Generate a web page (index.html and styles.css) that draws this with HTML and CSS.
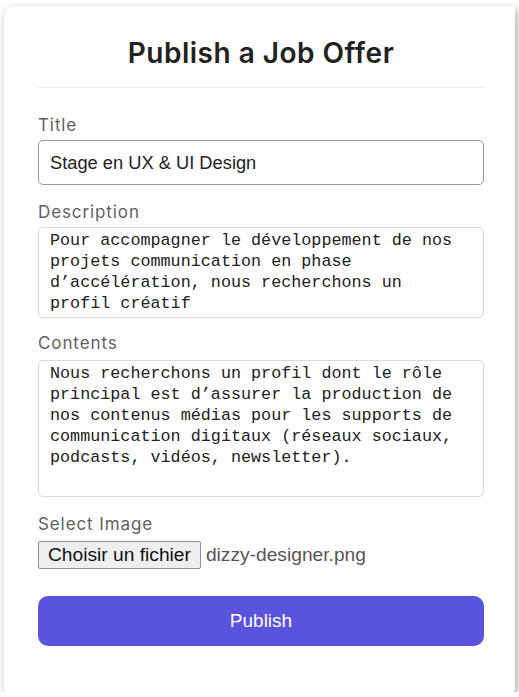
FILE: index.html
```html
<!DOCTYPE html>
<html lang="fr">
<head>
<meta charset="utf-8">
<title>Publish a Job Offer</title>
<link rel="stylesheet" href="styles.css">
</head>
<body>
<div class="card">
  <h1 class="title">Publish a Job Offer</h1>
  <div class="divider"></div>
  <form class="form">
    <label class="label">Title</label>
    <input class="input" type="text" value="Stage en UX &amp; UI Design">
    <label class="label label-desc">Description</label>
    <textarea class="area area-desc">Pour accompagner le développement de nos projets communication en phase d’accélération, nous recherchons un profil créatif</textarea>
    <label class="label label-contents">Contents</label>
    <textarea class="area area-contents">Nous recherchons un profil dont le rôle principal est d’assurer la production de nos contenus médias pour les supports de communication digitaux (réseaux sociaux, podcasts, vidéos, newsletter).</textarea>
    <label class="label label-image">Select Image</label>
    <div class="file-row">
      <span class="file-btn">Choisir un fichier</span>
      <span class="file-name">dizzy-designer.png</span>
    </div>
    <button class="publish" type="button">Publish</button>
  </form>
</div>
</body>
</html>
```
FILE: styles.css
```css
html, body {
  margin: 0;
  padding: 0;
  background: #ffffff;
}
body {
  padding: 6px 4px 0 4px;
  font-family: "Inter", "Liberation Sans", sans-serif;
}
.card {
  width: 511px;
  height: 686px;
  box-sizing: border-box;
  background: #ffffff;
  border-radius: 10px 4px 3px 3px;
  box-shadow: 2px 3px 8px rgba(0,0,0,0.35);
  padding: 0 31px 0 34px;
}
.title {
  margin: 0;
  padding-top: 27px;
  height: 40px;
  line-height: 40px;
  text-align: center;
  font-family: "Inter", sans-serif;
  font-weight: 600;
  font-size: 28px;
  color: #222222;
  letter-spacing: 0.5px;
}
.divider {
  margin-top: 14px;
  height: 1px;
  background: #eeeeee;
}
.form {
  display: flex;
  flex-direction: column;
  padding-top: 25px;
}
.label {
  font-family: "Inter", sans-serif;
  font-size: 17px;
  line-height: 24px;
  letter-spacing: 0.9px;
  color: #5f5f5f;
  margin-bottom: 3px;
}
.label-desc {
  margin-top: 15px;
}
.label-contents {
  margin-top: 13px;
  margin-bottom: 5px;
}
.label-image {
  margin-top: 15px;
}
.input {
  box-sizing: border-box;
  height: 45px;
  width: 100%;
  border: 1px solid #9a9a9a;
  border-radius: 5px;
  padding: 0 11px;
  font-family: "Liberation Sans", Arial, sans-serif;
  font-size: 18.3px;
  color: #222222;
  outline: none;
}
.area {
  box-sizing: border-box;
  width: 100%;
  border: 1px solid #dadada;
  border-radius: 5px;
  padding: 2px 11px;
  font-family: "Liberation Mono", monospace;
  font-size: 16.75px;
  line-height: 21px;
  color: #222222;
  resize: none;
  overflow: hidden;
  outline: none;
}
.area-desc {
  height: 91px;
}
.area-contents {
  height: 137px;
}
.file-row {
  display: flex;
  align-items: center;
  gap: 5px;
  margin-top: 2px;
}
.file-btn {
  box-sizing: border-box;
  height: 28px;
  line-height: 26px;
  padding: 0 9px;
  background: #efefef;
  border: 1px solid #8f8f8f;
  border-radius: 2px;
  font-family: "Liberation Sans", Arial, sans-serif;
  font-size: 19.2px;
  color: #111111;
}
.file-name {
  font-family: "Liberation Sans", Arial, sans-serif;
  font-size: 19.2px;
  color: #555555;
}
.publish {
  margin-top: 27px;
  height: 50px;
  width: 100%;
  border: none;
  border-radius: 10px;
  background: #5a53de;
  color: #ffffff;
  font-family: "Liberation Sans", Arial, sans-serif;
  font-size: 19px;
}
```
